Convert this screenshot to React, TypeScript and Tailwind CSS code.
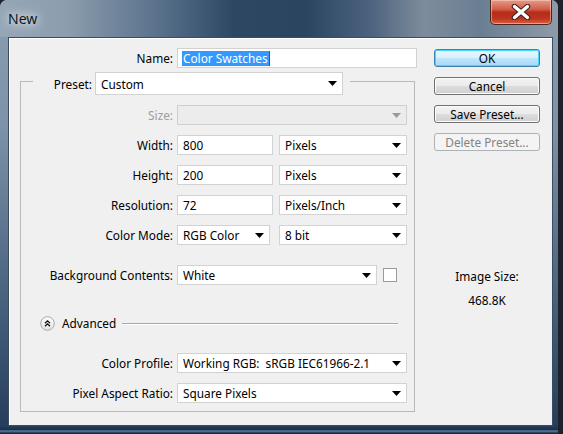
import React from "react";

function Arrow({ grey = false }: { grey?: boolean }) {
  return (
    <svg width="9" height="5" viewBox="0 0 9 5" className="shrink-0">
      <path d="M0 0h9L4.5 5z" fill={grey ? "#9a9a9a" : "#000"} />
    </svg>
  );
}

function Select({
  w,
  value,
  disabled = false,
  tall = false,
}: {
  w: string;
  value?: string;
  disabled?: boolean;
  tall?: boolean;
}) {
  return (
    <div
      className={`${w} ${tall ? "h-[23px]" : "h-[20px]"} flex items-center justify-between border pl-[5px] pr-[5px] ${
        disabled ? "border-[#cfcfcf] bg-[#ececec]" : "border-[#d2d2d2] bg-white"
      }`}
    >
      <span className="whitespace-pre leading-[18px]">{value}</span>
      <Arrow grey={disabled} />
    </div>
  );
}

function Field({ w, value }: { w: string; value: string }) {
  return (
    <div className={`${w} h-[20px] flex items-center border border-[#d2d2d2] bg-white pl-[5px]`}>
      <span className="leading-[18px]">{value}</span>
    </div>
  );
}

function Row({
  label,
  grey = false,
  className = "",
  children,
}: {
  label: string;
  grey?: boolean;
  className?: string;
  children: React.ReactNode;
}) {
  return (
    <div className={`flex h-[20px] items-center ${className}`}>
      <div className={`w-[152px] text-right leading-[20px] ${grey ? "text-[#9d9d9d]" : ""}`}>{label}</div>
      <div className="ml-[4px] flex items-center">{children}</div>
    </div>
  );
}

function Button({
  label,
  kind = "normal",
}: {
  label: string;
  kind?: "default" | "normal" | "disabled";
}) {
  const styles = {
    default:
      "border-[#3c7fb1] bg-[linear-gradient(180deg,#eaf6fd_0%,#d9f0fc_50%,#bee6fd_51%,#a7d9f5_100%)] shadow-[inset_0_0_0_1px_#48d8fb]",
    normal:
      "border-[#707070] bg-[linear-gradient(180deg,#f2f2f2_0%,#ebebeb_50%,#dddddd_51%,#cfcfcf_100%)] shadow-[inset_0_0_0_1px_#fcfcfc]",
    disabled: "border-[#adb2b5] bg-[#f4f4f4] text-[#838383]",
  }[kind];
  return (
    <div
      className={`flex h-[18px] w-[106px] items-center justify-center rounded-[3px] border leading-[16px] ${styles}`}
    >
      {label}
    </div>
  );
}

function AdvancedIcon() {
  return (
    <svg width="15" height="15" viewBox="0 0 15 15" className="shrink-0">
      <defs>
        <linearGradient id="adv" x1="0" y1="0" x2="0" y2="1">
          <stop offset="0" stopColor="#ffffff" />
          <stop offset="1" stopColor="#e2e2e2" />
        </linearGradient>
      </defs>
      <circle cx="7.5" cy="7.5" r="6.8" fill="url(#adv)" stroke="#a9a9a9" />
      <path d="M5 7.2 7.5 4.8 10 7.2M5 10.3 7.5 7.9 10 10.3" fill="none" stroke="#111" strokeWidth="1.3" />
    </svg>
  );
}

function CloseButton() {
  return (
    <div className="mr-[6px] flex h-[25px] w-[62px] items-center justify-center rounded-b-[5px] border border-t-0 border-[#4b2520] bg-[linear-gradient(180deg,#e59a88_0%,#d2604a_38%,#b52c18_52%,#bd3520_78%,#e0603c_100%)] shadow-[inset_0_0_0_1px_rgba(255,220,210,0.5)]">
      <svg width="20" height="16" viewBox="0 0 20 16">
        <path d="M3.5 2.5 16.5 13.5M16.5 2.5 3.5 13.5" stroke="#3b2220" strokeWidth="5.5" strokeLinecap="round" />
        <path d="M3.5 2.5 16.5 13.5M16.5 2.5 3.5 13.5" stroke="#ffffff" strokeWidth="3.4" strokeLinecap="round" />
      </svg>
    </div>
  );
}

export default function App() {
  return (
    <div className="h-[434px] w-[563px] overflow-hidden bg-[#1f222b] font-['Noto_Sans','Open_Sans',sans-serif] text-[11.8px] text-black">
      <div className="flex h-[434px] w-[558px] flex-col overflow-hidden rounded-t-[7px] bg-[linear-gradient(180deg,#8b9eb1_0%,#7d92a8_30%,#4d6682_65%,#243c5a_100%)]">
        {/* title bar */}
        <div className="flex h-[37px] shrink-0 items-start justify-between bg-[linear-gradient(90deg,#95a6b7_0%,#8c9dae_12%,#5a728c_28%,#2d4763_42%,#2b4561_55%,#4a627d_66%,#7d8c9c_76%,#6a7e93_86%,#8f9ba7_100%)]">
          <div className="pl-[8px] pt-[9px] text-[14px] leading-[20px] text-[#0f1720] [text-shadow:0_0_8px_#ffffff,0_0_14px_rgba(255,255,255,0.8)]">
            New
          </div>
          <CloseButton />
        </div>

        <div className="flex flex-1 pl-[8px] pr-[5px]">
          <div className="flex w-[545px] border border-[#3b4c5f] bg-[#f0f0f0] pl-[11px] pt-[10px] shadow-[inset_1px_1px_0_#ffffff]">
            {/* form column */}
            <div className="w-[397px]">
              <div className="flex h-[20px] items-center">
                <div className="w-[153px] text-right leading-[20px]">Name:</div>
                <div className="ml-[4px] flex h-[20px] w-[240px] items-center border border-[#d2d2d2] bg-white pl-[4px]">
                  <span className="bg-[#3399ff] px-[1px] leading-[15px] text-white">Color Swatches</span>
                  <span className="h-[15px] w-px bg-[#7a4a1a]" />
                </div>
              </div>

              <div className="mt-[13px] w-[395px] border border-[#b9b9b9] pb-[8px]">
                <div className="-mt-[10px] ml-[12px] flex h-[23px] w-[317px] items-center bg-[#f0f0f0]">
                  <div className="w-[59px] text-right leading-[20px]">Preset:</div>
                  <div className="ml-[3px]">
                    <Select w="w-[248px]" value="Custom" tall />
                  </div>
                </div>

                <Row label="Size:" grey className="mt-[10px]">
                  <Select w="w-[230px]" disabled />
                </Row>
                <Row label="Width:" className="mt-[10px]">
                  <Field w="w-[96px]" value="800" />
                  <div className="ml-[6px]">
                    <Select w="w-[128px]" value="Pixels" />
                  </div>
                </Row>
                <Row label="Height:" className="mt-[10px]">
                  <Field w="w-[96px]" value="200" />
                  <div className="ml-[6px]">
                    <Select w="w-[128px]" value="Pixels" />
                  </div>
                </Row>
                <Row label="Resolution:" className="mt-[10px]">
                  <Field w="w-[96px]" value="72" />
                  <div className="ml-[6px]">
                    <Select w="w-[128px]" value="Pixels/Inch" />
                  </div>
                </Row>
                <Row label="Color Mode:" className="mt-[10px]">
                  <Select w="w-[93px]" value="RGB Color" />
                  <div className="ml-[9px]">
                    <Select w="w-[128px]" value="8 bit" />
                  </div>
                </Row>
                <Row label="Background Contents:" className="mt-[20px]">
                  <Select w="w-[200px]" value="White" />
                  <div className="ml-[6px] h-[14px] w-[14px] border border-[#9a9a9a] bg-white" />
                </Row>

                <div className="mt-[30px] flex h-[16px] items-center">
                  <div className="ml-[19px]">
                    <AdvancedIcon />
                  </div>
                  <span className="ml-[7px] leading-[16px]">Advanced</span>
                  <div className="ml-[6px] mr-[16px] h-px flex-1 bg-[#a8a8a8] shadow-[0_1px_0_#ffffff]" />
                </div>

                <Row label="Color Profile:" className="mt-[22px]">
                  <Select w="w-[230px]" value="Working RGB:  sRGB IEC61966-2.1" />
                </Row>
                <Row label="Pixel Aspect Ratio:" className="mt-[10px]">
                  <Select w="w-[230px]" value="Square Pixels" />
                </Row>
              </div>
            </div>

            {/* buttons column */}
            <div className="ml-[17px] flex w-[106px] flex-col pt-[1px]">
              <div className="flex flex-col gap-[10px]">
                <Button label="OK" kind="default" />
                <Button label="Cancel" />
                <Button label="Save Preset..." />
                <Button label="Delete Preset..." kind="disabled" />
              </div>
              <div className="mt-[117px] text-center leading-[16px]">Image Size:</div>
              <div className="mt-[8px] text-center leading-[16px]">468.8K</div>
            </div>
          </div>
        </div>

        {/* bottom frame */}
        <div className="h-[8px] shrink-0 bg-[linear-gradient(180deg,#24405f_0%,#1b3049_45%,#5f7fa3_62%,#2c4766_80%,#111a26_100%)]" />
      </div>
    </div>
  );
}
